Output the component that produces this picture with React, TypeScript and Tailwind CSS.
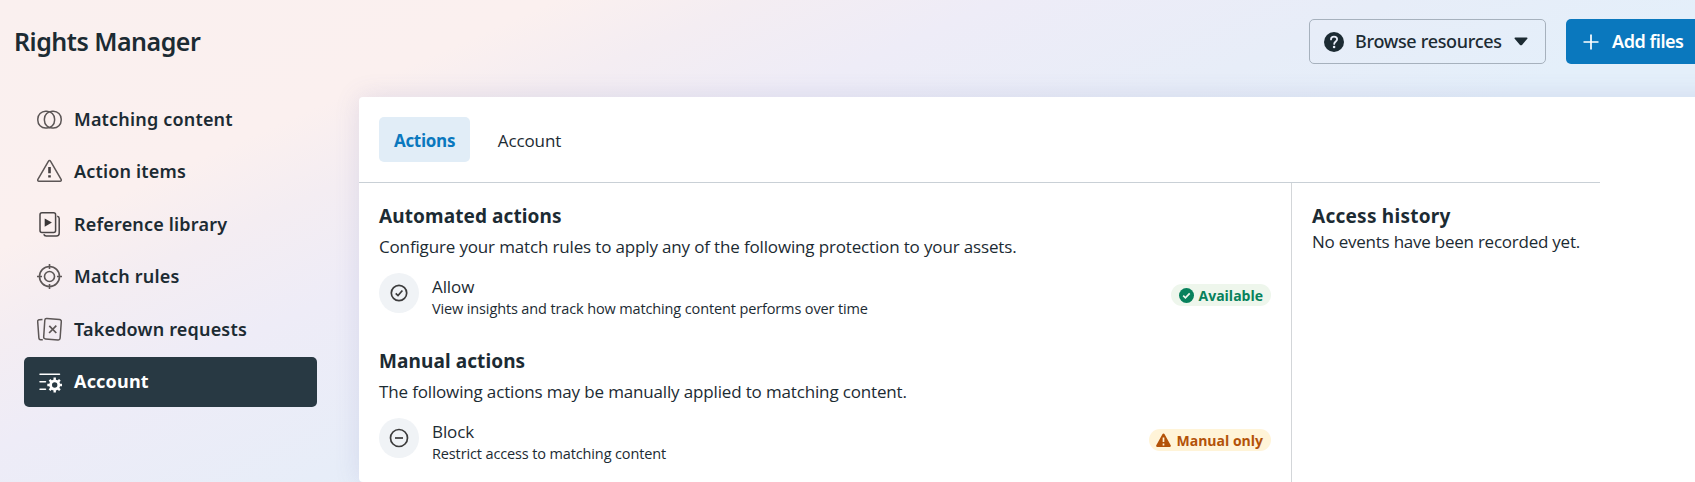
import type { ReactNode } from "react";

const navItems = [
  { label: "Matching content", icon: <MatchingIcon /> },
  { label: "Action items", icon: <WarningIcon /> },
  { label: "Reference library", icon: <LibraryIcon /> },
  { label: "Match rules", icon: <TargetIcon /> },
  { label: "Takedown requests", icon: <TakedownIcon /> },
  { label: "Account", icon: <AccountIcon />, active: true },
];

function MatchingIcon() {
  return (
    <svg width="25" height="25" viewBox="0 0 25 25" fill="none" stroke="#5c5656" strokeWidth="1.5">
      <rect x="0.8" y="4.2" width="16.8" height="16.8" rx="7.8" />
      <rect x="7.4" y="4.2" width="16.8" height="16.8" rx="7.8" />
    </svg>
  );
}

function WarningIcon() {
  return (
    <svg width="25" height="25" viewBox="0 0 25 25" fill="none" stroke="#5c5656" strokeWidth="1.5" strokeLinejoin="round">
      <path d="M11.5 2.1 .9 20.4c-.5.9 0 1.8 1 1.8h21.2c1 0 1.5-.9 1-1.8L13.5 2.1c-.4-.9-1.6-.9-2 0Z" />
      <path d="M12.5 8v6.3M12.5 16.2v2.4" strokeWidth="2.6" stroke="#443f40" />
    </svg>
  );
}

function LibraryIcon() {
  return (
    <svg width="25" height="25" viewBox="0 0 25 25" fill="none" stroke="#4b4647" strokeWidth="1.5">
      <rect x="3" y="0.8" width="15.6" height="19.6" rx="2" />
      <path d="M20.2 4.2c1.3.2 2 1 2 2.2v14.8c0 1.8-.9 2.7-2.7 2.7H9.200c-1.3 0-2.1-.6-2.4-1.7" />
      <path d="M7.7 6.5v8.2l7.2-4.1Z" fill="#3a3637" stroke="none" />
    </svg>
  );
}

function TargetIcon() {
  return (
    <svg width="25" height="25" viewBox="0 0 25 25" fill="none" stroke="#5c5656" strokeWidth="1.6">
      <circle cx="12.5" cy="12.5" r="10" />
      <circle cx="12.5" cy="12.5" r="5" />
      <path d="M12.5 0v5M12.5 20v5M0 12.5h5M20 12.5h5" />
    </svg>
  );
}

function TakedownIcon() {
  return (
    <svg width="25" height="25" viewBox="0 0 25 25" fill="none" stroke="#5c5656" strokeWidth="1.5">
      <path d="M9.8 1.5 22.5 2.5c1.2.1 1.9.9 1.8 2.1l-1.2 16.7c-.1 1.2-.9 1.8-2.1 1.7L8.500 22c-1.2-.1-1.9-.9-1.8-2.1L7.8 3.2c.1-1.2.8-1.8 2-1.7Z" />
      <path d="M5.5 2.5 2.3 2.8C1.1 2.9.5 3.6.7 4.8l1.2 16.3c.1 1.2.8 1.8 2 1.7l1.9-.1" />
      <path d="m12.3 8.8 7 7.2M19.3 8.600l-7.2 7.4" strokeWidth="1.7" />
    </svg>
  );
}

function AccountIcon() {
  return (
    <svg width="25" height="25" viewBox="0 0 25 25" fill="none" stroke="#fff" strokeWidth="1.5">
      <path d="M3 5.3h19.5M3 12.7h5.5M3 20.3h5.5" strokeLinecap="round" />
      <circle cx="17.7" cy="16" r="4.1" strokeWidth="2.8" />
      <path
        d="M17.7 8.6v3M17.7 20.4v3M10.3 16h3M22.1 16h3M12.5 10.8l2.1 2.1M20.8 19.1l2.1 2.1M12.5 21.2l2.1-2.1M20.8 12.9l2.1-2.1"
        strokeWidth="2.4"
      />
    </svg>
  );
}

function HelpIcon() {
  return (
    <svg width="20" height="20" viewBox="0 0 20 20" fill="none">
      <circle cx="10" cy="10" r="10" fill="#1c2b33" />
      <path
        d="M7 7.4C7 5.7 8.2 4.7 10 4.7s3.1 1 3.1 2.6c0 2.1-2.9 2.2-2.9 4.6"
        stroke="#e9edf8"
        strokeWidth="1.8"
        strokeLinecap="round"
      />
      <circle cx="10.1" cy="15" r="1.3" fill="#e9edf8" />
    </svg>
  );
}

function ActionIcon({ children }: { children: ReactNode }) {
  return (
    <span className="flex size-10 shrink-0 items-center justify-center rounded-full bg-[#f0f3f6]">
      <svg width="20" height="20" viewBox="0 0 20 20" fill="none" stroke="#3c3c3c" strokeWidth="1.7">
        {children}
      </svg>
    </span>
  );
}

function ActionText({ name, text }: { name: string; text: string }) {
  return (
    <div className="ml-[13px] pt-[2px] whitespace-nowrap">
      <p className="text-[17px] leading-6 tracking-[-0.1px]">{name}</p>
      <p className="text-[14.5px] leading-5 tracking-[-0.13px]">{text}</p>
    </div>
  );
}

function Section({ title, text, children }: { title: string; text: string; children: ReactNode }) {
  return (
    <section className="h-[145px]">
      <h2 className="font-['Noto_Sans',sans-serif] text-[19px] leading-6 font-bold tracking-[0.1px] whitespace-nowrap">{title}</h2>
      <p className="mt-[7px] text-[17px] leading-6 tracking-[-0.155px] whitespace-nowrap">{text}</p>
      <div className="mt-[14px] flex items-start">{children}</div>
    </section>
  );
}

export default function App() {
  return (
    <div className="h-[482px] w-[1695px] overflow-hidden bg-[linear-gradient(156deg,#faf0ef_0%,#fbf0ef_20%,#f4edf2_27%,#eeecf7_36%,#e7edf8_50%,#e4effa_62%)] font-['Open_Sans',sans-serif] text-[#1c2b33]">
      <header className="flex h-[97px] items-start pt-[19px] pl-[14px] font-['Noto_Sans',sans-serif]">
        <h1 className="text-[25px] leading-[45px] font-semibold tracking-[-0.5px] whitespace-nowrap">Rights Manager</h1>
        <button className="ml-auto flex h-[45px] w-[237px] shrink-0 items-center rounded-[5px] border border-[#a6b1bd] pl-[14px] text-[18px] font-medium tracking-[-0.32px]">
          <HelpIcon />
          <span className="ml-[11px] whitespace-nowrap">Browse resources</span>
          <svg className="mr-[17px] ml-auto" width="14" height="9" viewBox="0 0 14 9">
            <path d="M1.3.5h11.4c.8 0 1.1.8.6 1.3L8 7.9c-.6.6-1.4.6-2 0L.7 1.8C.2 1.3.5.5 1.3.5Z" fill="#1c2b33" />
          </svg>
        </button>
        <button className="ml-5 flex h-[45px] w-[129px] shrink-0 items-center rounded-l-[5px] bg-[#0a78be] pl-[17px] text-[18px] font-semibold tracking-[-0.45px] text-white">
          <svg width="16" height="16" viewBox="0 0 16 16" stroke="#fff" strokeWidth="1.7">
            <path d="M8 .5v15M.5 8h15" />
          </svg>
          <span className="ml-[13px] whitespace-nowrap">Add files</span>
        </button>
      </header>

      <div className="flex">
        <nav className="-mt-[3px] flex w-[359px] shrink-0 flex-col gap-[2.5px] pl-6 font-['Noto_Sans',sans-serif]">
          {navItems.map((item) => (
            <a
              key={item.label}
              className={`flex h-[50px] w-[293px] items-center rounded-[5px] pl-[13px] text-[18px] tracking-[0.18px] ${
                item.active ? "bg-[#283943] font-bold text-white" : "font-semibold"
              }`}
            >
              {item.icon}
              <span className="ml-[12px] whitespace-nowrap">{item.label}</span>
            </a>
          ))}
        </nav>

        {/* the panel runs past the right edge of the page */}
        <main className="-mr-10 h-[385px] grow rounded-[4px] bg-white shadow-[0_0_26px_rgba(90,90,160,0.14)]">
          <div className="flex h-[86px] w-[1241px] items-start border-b border-[#c9d0d6] pt-5 pl-5 text-[17px]">
            <button className="h-[45px] w-[91px] rounded-[5px] bg-[#e1edf7] pt-[2px] font-bold tracking-[-0.3px] text-[#0a78be]">Actions</button>
            <button className="ml-2 h-[45px] w-[103px] pt-[2px] tracking-[-0.1px]">Account</button>
          </div>
          <div className="flex h-[299px]">
            <div className="w-[933px] shrink-0 border-r border-[#d3d6d9] pt-[21px] pl-5">
              <Section
                title="Automated actions"
                text="Configure your match rules to apply any of the following protection to your assets."
              >
                <ActionIcon>
                  <circle cx="10" cy="10" r="7.7" />
                  <path d="m6.7 10.3 2.3 2.2 4.4-5" />
                </ActionIcon>
                <ActionText name="Allow" text="View insights and track how matching content performs over time" />
                <span className="mt-[11px] mr-[20px] ml-auto flex h-[22px] items-center rounded-full bg-[#eef6ec] px-2 text-[14px] font-bold text-[#07815c]">
                  <svg className="mr-[5px]" width="15" height="15" viewBox="0 0 15 15" fill="none">
                    <circle cx="7.5" cy="7.5" r="7.5" fill="#07815c" />
                    <path d="m4.2 7.7 2.2 2.1 4.3-4.5" stroke="#eef6ec" strokeWidth="1.7" />
                  </svg>
                  Available
                </span>
              </Section>
              <Section title="Manual actions" text="The following actions may be manually applied to matching content.">
                <ActionIcon>
                  <circle cx="10" cy="10" r="8.5" />
                  <path d="M6 10h8" />
                </ActionIcon>
                <ActionText name="Block" text="Restrict access to matching content" />
                <span className="mt-[11px] mr-[20px] ml-auto flex h-[22px] items-center rounded-full bg-[#fff4d8] pr-2 pl-[7px] text-[14px] font-bold text-[#b35208]">
                  <svg className="mr-[5px]" width="15" height="15" viewBox="0 0 15 15">
                    <path
                      d="M6.4 1.2c.5-.9 1.7-.9 2.2 0l6.1 11c.5.9-.1 1.9-1.1 1.9H1.4c-1 0-1.6-1-1.1-1.9Z"
                      fill="#b35208"
                    />
                    <path d="M7.5 4.5v4.6M7.5 10.6v1.8" stroke="#fff4d8" strokeWidth="1.7" />
                  </svg>
                  Manual only
                </span>
              </Section>
            </div>
            <aside className="pt-[21px] pl-5 whitespace-nowrap">
              <h2 className="font-['Noto_Sans',sans-serif] text-[19px] leading-6 font-bold tracking-[0.25px]">Access history</h2>
              <p className="mt-[2px] text-[17px] leading-6 tracking-[-0.24px]">No events have been recorded yet.</p>
            </aside>
          </div>
        </main>
      </div>
    </div>
  );
}
